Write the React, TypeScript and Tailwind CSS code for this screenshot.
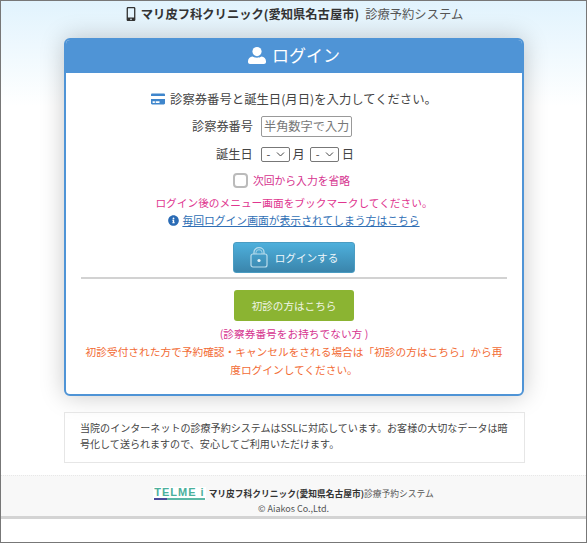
import { FaMobileAlt, FaCreditCard, FaInfoCircle } from 'react-icons/fa';

function UserIcon() {
  return (
    <svg width="18" height="17" viewBox="0 0 18 17" fill="#fff">
      <circle cx="9" cy="4.6" r="4.6" />
      <path d="M4.5 9.6c1.2.8 2.8 1.2 4.5 1.2s3.300-.4 4.500-1.200c2.600.2 4.500 2.100 4.500 4.700v.7c0 1.100-.9 2-2 2H2c-1.100 0-2-.9-2-2v-.7c0-2.600 1.900-4.500 4.500-4.700z" />
    </svg>
  );
}

function LockIcon() {
  return (
    <svg width="18" height="21" viewBox="0 0 18 21" fill="none" stroke="#b9dcec" strokeWidth="1.2">
      <rect x="1" y="7" width="16" height="13" rx="2" />
      <path d="M4 7V5a5 4.300 0 0 1 10 0v2" />
      <path d="M6 7V5.300a3 2.600 0 0 1 6 0V7" strokeWidth="0.8" />
      <circle cx="9" cy="13.500" r="1.600" fill="#e6f3f9" stroke="none" />
    </svg>
  );
}

function SelectBox() {
  return (
    <div className="w-[29px] h-[15px] border border-[#777] rounded-[2px] text-[11px] flex items-center justify-between pl-[5px] pr-[4px]">
      <span>-</span>
      <svg width="9" height="5" viewBox="0 0 9 5" fill="none" stroke="#444">
        <path d="M1 .5l3.500 3.500L8 .5" />
      </svg>
    </div>
  );
}

export default function App() {
  return (
    <div className="w-[587px] h-[543px] border border-[#777] overflow-hidden bg-white flex flex-col font-['Noto_Sans_CJK_JP','Noto_Sans',sans-serif] text-[#444]">
      <div className="bg-gradient-to-b from-[#e1f3fd] to-white to-[105px]">
        <header className="h-[37px] pt-[4px] flex items-start justify-center gap-[3px] text-[12.3px] leading-[18px]">
          <FaMobileAlt className="text-[#333] text-[14px] mt-[2px]" />
          <b className="text-[#333]">マリ皮フ科クリニック(愛知県名古屋市)</b>
          <span className="ml-[3px] text-[#555]">診療予約システム</span>
        </header>

        <main className="mx-[63px] w-[460px] h-[358px] rounded-[6px] border-2 border-[#4f94d6] bg-white shadow-[0_0_24px_rgba(0,0,0,0.22)] flex flex-col overflow-hidden">
          <div className="h-[33px] shrink-0 pb-[3px] bg-[#4f94d6] flex items-center justify-center gap-[6px] text-white text-[17px]">
            <UserIcon />
            <span>ログイン</span>
          </div>

          <div className="flex flex-col items-center px-[15px] pt-[16px] text-[12px]">
            <p className="flex items-center gap-[5px] h-[20px] text-[12.35px]">
              <FaCreditCard className="text-[#3f86cc] text-[14px]" />
              診察券番号と誕生日(月日)を入力してください。
            </p>

            <div className="mt-[6px] mr-[44px] flex items-center h-[22px]">
              <span className="mr-[8px] text-[12.2px]">診察券番号</span>
              <input
                placeholder="半角数字で入力"
                className="w-[91px] h-[21px] px-[2px] border border-[#999] rounded-[2px] text-[12.2px] placeholder:text-[#777]"
              />
            </div>

            <div className="mt-[7px] mr-[18px] flex items-center h-[20px] text-[12.2px]">
              <span className="mr-[8px]">誕生日</span>
              <SelectBox />
              <span className="ml-[3px] mr-[5px]">月</span>
              <SelectBox />
              <span className="ml-[3px]">日</span>
            </div>

            <label className="mt-[6px] mr-[5px] flex items-center h-[20px] gap-[5px] text-[10.8px] text-[#d6348f]">
              <span className="w-[15px] h-[15px] border-2 border-[#bbb] rounded-[4px]" />
              次回から入力を省略
            </label>

            <p className="mt-[5px] h-[17px] flex items-center text-[10.7px] text-[#e0358f]">ログイン後のメニュー画面をブックマークしてください。</p>
            <a className="h-[17px] flex items-center text-[10.8px] text-[#2f6fb5] underline">
              <FaInfoCircle className="text-[#2a6bb5] text-[11px] mr-[3px]" />
              毎回ログイン画面が表示されてしまう方はこちら
            </a>

            <button className="mt-[13px] w-[122px] h-[31px] rounded-[3px] bg-gradient-to-b from-[#4eb0dc] to-[#3a85ac] border border-[#4a9cc2] flex items-center justify-center gap-[7px] text-[10.6px] text-[#eef7fb]">
              <LockIcon />
              ログインする
            </button>

            <div className="mt-[4px] w-full h-[2px] bg-[#d2d2d2]" />

            <button className="mt-[11px] w-[120px] h-[31px] rounded-[3px] bg-[#8bb432] text-[10.6px] text-[#f0f4e6]">初診の方はこちら</button>

            <p className="mt-[4px] text-[10.7px] leading-[18px] text-[#d6348f]">(診察券番号をお持ちでない方&nbsp;)</p>
            <p className="text-[10.7px] leading-[18px] text-[#f26b35] text-center">初診受付された方で予約確認・キャンセルをされる場合は「初診の方はこちら」から再度ログインしてください。</p>
          </div>
        </main>
      </div>

      <section className="mt-[16px] mx-[63px] w-[461px] h-[51px] border border-[#e6e6e6] pl-[15px] pr-[14px] pt-[7px] text-[10.05px] leading-[16px] text-[#444]">
        当院のインターネットの診療予約システムはSSLに対応しています。お客様の大切なデータは暗号化して送られますので、安心してご利用いただけます。
      </section>

      <footer className="mt-[12px] bg-[#f8f8f8] border-t border-t-[#e8e8e8] [border-top-style:dotted] border-b-[3px] border-b-[#d4d4d4] flex flex-col items-center pt-[10px]">
        <div className="flex items-center h-[15px] text-[8.75px]">
          <span className="mr-[3px] bg-white px-[1px] flex flex-col">
            <span className="font-['Liberation_Sans',sans-serif] font-bold text-[11px] leading-[11px] tracking-[1px] text-[#4bb09c]">TELME i</span>
            <span className="h-[2px] w-full bg-gradient-to-r from-[#4a4a9a] from-[25%] to-[#5cb8a6] to-[25%]" />
          </span>
          <b className="text-[#333]">マリ皮フ科クリニック(愛知県名古屋市)</b>
          <span className="text-[#555]">診療予約システム</span>
        </div>
        <div className="h-[15px] flex items-center text-[9px] text-[#555]">© Aiakos Co.,Ltd.</div>
      </footer>
    </div>
  );
}
